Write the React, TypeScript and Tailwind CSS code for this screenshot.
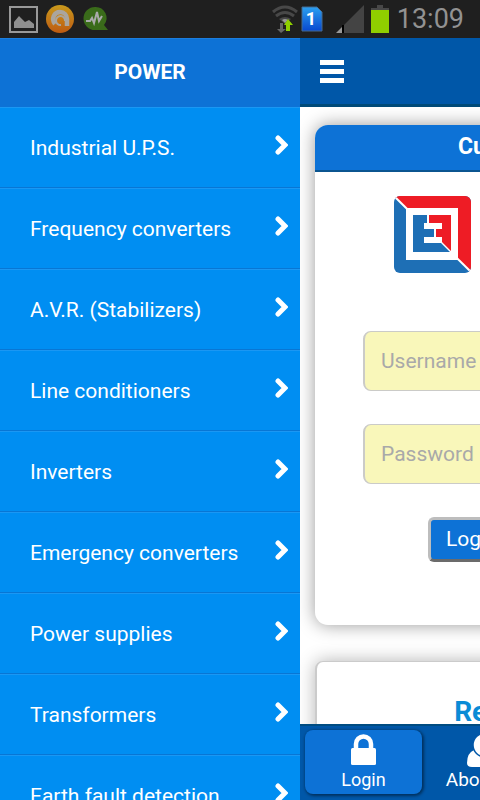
const menuItems = [
  'Industrial U.P.S.',
  'Frequency converters',
  'A.V.R. (Stabilizers)',
  'Line conditioners',
  'Inverters',
  'Emergency converters',
  'Power supplies',
  'Transformers',
  'Earth fault detection',
];

function StatusBar() {
  return (
    <div className="flex h-[38px] shrink-0 items-center justify-between bg-[#1f1f1f] pl-[9px] pr-4">
      <div className="flex items-center gap-2">
        {/* Picture */}
        <svg width="29" height="27" viewBox="0 0 29 27">
          <rect x="1" y="1" width="27" height="25" fill="none" stroke="#999" strokeWidth="2" />
          <path d="M5 22v-6l5-6 6 6 4-2 5 4v4z" fill="#8f8f8f" />
        </svg>
        {/* Antivirus */}
        <svg width="28" height="28" viewBox="0 0 28 28">
          <defs>
            <linearGradient id="orange" x1="0" y1="0" x2="0" y2="1">
              <stop offset="0" stopColor="#c99a1c" />
              <stop offset="1" stopColor="#bd5a12" />
            </linearGradient>
          </defs>
          <circle cx="14" cy="14" r="14" fill="url(#orange)" />
          <path d="M9 19C5 14 8 7 14 7c4 0 7 3 7 7v7" fill="none" stroke="#aaa59e" strokeWidth="4.5" />
          <path d="M19 16a4.5 4.5 0 1 0-4 4" fill="none" stroke="#aaa59e" strokeWidth="2" />
        </svg>
        {/* Monitor */}
        <svg width="26" height="26" viewBox="0 0 26 26" className="ml-px">
          <path d="M12 1a11 11 0 1 0 0 23h13l-4-5A11 11 0 0 0 12 1z" fill="#3a6b1a" />
          <path d="M3 15h4l2-3 2 5 3-11 2 9 3-5" fill="none" stroke="#aaa" strokeWidth="2" />
        </svg>
      </div>

      <div className="flex items-center">
        {/* Wifi */}
        <svg width="26" height="28" viewBox="0 0 26 28">
          <g fill="none" stroke="#484848" strokeWidth="3">
            <path d="M1 7q12-10 24 0" />
            <path d="M4 11q9-7 18 0" />
          </g>
          <path d="M7 14q6-4 12 0l-6 5z" fill="#484848" />
          <path d="M10 15q3-2 6 0l-3 3z" fill="#999" />
          <path d="M8 18h3v6h3l-5 4-4-4h3z" fill="#666" />
          <path d="M14 26v-6h-2l4-6 5 6h-3v6z" fill="#8fd000" />
        </svg>
        {/* Sim card */}
        <svg width="22" height="26" viewBox="0 0 22 26" className="ml-[3px]">
          <defs>
            <linearGradient id="sim" x1="0" y1="0" x2="0" y2="1">
              <stop offset="0" stopColor="#2ba0f0" />
              <stop offset="1" stopColor="#0848d0" />
            </linearGradient>
          </defs>
          <path d="M1 1h15l5 5v19H1z" fill="url(#sim)" stroke="#456b91" />
          <text x="10" y="19" fill="#fff" fontSize="18" fontWeight="700" textAnchor="middle">1</text>
        </svg>
        {/* Signal */}
        <svg width="28" height="28" viewBox="0 0 28 28" className="ml-[13px]">
          <path d="M28 0v28H8V20z" fill="#444" />
          <path d="M0 28l6-6v6z" fill="#999" />
          <path d="M7 20v8" stroke="#000" strokeWidth="2" />
        </svg>
        {/* Battery */}
        <svg width="18" height="28" viewBox="0 0 18 28" className="ml-[7px]">
          <path d="M6 0h6v3h6v2H0V3h6z" fill="#484848" />
          <path d="M0 5h18v23H0z" fill="#90ce00" />
        </svg>
        <span className="ml-2 text-[27px] leading-8 text-[#929292]">13:09</span>
      </div>
    </div>
  );
}

function SideMenu() {
  return (
    <nav className="w-[300px] shrink-0 overflow-hidden bg-[#008ef2] text-white">
      <h2 className="flex h-[69px] items-center justify-center border-t border-[#1b7ddd] bg-[#0d72d6] text-[21px] font-bold">
        POWER
      </h2>
      <ul>
        {menuItems.map((item) => (
          <li key={item}>
            <a
              href="#"
              className="flex h-[81px] items-center justify-between border-t border-b border-t-[#1b97f3] border-b-[#0876d4] pt-0.5 pl-[30px] pr-3 text-[21px]"
            >
              {item}
              <svg width="13" height="20" viewBox="0 0 13 20" className="mb-2">
                <path d="M3 3l7 7-7 7" fill="none" stroke="#fff" strokeWidth="5" strokeLinecap="round" />
              </svg>
            </a>
          </li>
        ))}
      </ul>
    </nav>
  );
}

function Logo() {
  return (
    <svg width="78" height="77" viewBox="0 0 78 77" role="img" aria-label="Logo">
      <defs>
        <clipPath id="logoFrame">
          <rect width="77" height="77" rx="6" />
        </clipPath>
      </defs>
      <g clipPath="url(#logoFrame)">
        <rect width="78" height="77" fill="#1e6fb5" />
        <path d="M0 0h78v77z" fill="#ee1c25" />
        <path d="M0 0l78 77" stroke="#fff" strokeWidth="2" />
      </g>
      <rect x="12" y="12" width="52" height="52" fill="#fff" />
      <path d="M19 19h14v8h-3v6h10v8H30v6h17l9 9H19z" fill="#1e6fb5" />
      <path d="M35 19h22v36l-9-9v-5h-6v-8h6v-6H35z" fill="#ee1c25" />
    </svg>
  );
}

function LoginCard() {
  return (
    <section className="h-[500px] rounded-[13px] bg-white shadow-[0_0_18px_rgba(0,0,0,0.4)]">
      <h1 className="h-[47px] rounded-t-[13px] border-b-2 border-[#0b5590] bg-[#0d72d6] text-center text-[23px] leading-[44px] font-bold text-white">
        Customer Login
      </h1>
      <form className="px-12 pt-6">
        <div className="pl-[31px]">
          <Logo />
        </div>
        <input
          type="text"
          aria-label="Username"
          placeholder="Username"
          className="mt-[58px] block h-[60px] w-full rounded-lg border border-l-2 border-[#cbcbc8] bg-[#f9f7ba] px-4 text-[21px] placeholder:text-[#a9a9a9]"
        />
        <input
          type="password"
          aria-label="Password"
          placeholder="Password"
          className="mt-[33px] block h-[60px] w-full rounded-lg border border-l-2 border-[#cbcbc8] bg-[#f9f7ba] px-4 text-[21px] placeholder:text-[#a9a9a9]"
        />
        <button
          type="button"
          className="mt-[33px] ml-[65px] h-[45px] rounded-md border-[3px] border-t-[#bdbdbd] border-r-[#6b6b6b] border-b-[#6b6b6b] border-l-[#bdbdbd] bg-[#0d72d6] px-[15px] pb-0.5 text-[21px] leading-6 text-white"
        >
          Login
        </button>
      </form>
    </section>
  );
}

function TabBar() {
  return (
    <nav className="flex h-[76px] shrink-0 gap-1 border-t-2 border-[#004c81] bg-[#0057a8] p-1 text-[18px] leading-5 text-white">
      <a
        href="#"
        className="mb-0.5 ml-px flex w-[117px] flex-col items-center rounded-lg bg-[#0d72d6] pt-1 shadow-[1px_1px_3px_1px_rgba(0,0,0,0.45)]"
      >
        <svg width="25" height="32" viewBox="0 0 25 32">
          <path d="M5 16V10a7.5 7.5 0 0 1 15 0v6" fill="none" stroke="#fff" strokeWidth="4.5" />
          <rect y="14" width="25" height="17" rx="1.5" fill="#fff" />
        </svg>
        <span className="mt-1">Login</span>
      </a>
      <a href="#" className="flex w-[117px] flex-col items-center pt-1">
        <svg width="36" height="34" viewBox="0 0 36 34">
          <path d="M7 16q11 8 22 0 7 3 7 13 0 4-5 4H5q-5 0-5-4 0-10 7-13z" fill="#fff" />
          <circle cx="18" cy="11" r="12" fill="#fff" stroke="#0057a8" strokeWidth="1.5" />
        </svg>
        <span className="mt-0.5 text-[19px]">About Us</span>
      </a>
    </nav>
  );
}

export default function App() {
  return (
    <div className="flex h-screen flex-col overflow-hidden font-[Roboto,'Liberation_Sans',sans-serif]">
      <StatusBar />
      <div className="flex min-h-0 flex-1 overflow-hidden">
        <SideMenu />
        {/* Page pushed to the right by the open menu */}
        <div className="flex w-screen shrink-0 flex-col bg-white">
          <header className="flex h-[69px] shrink-0 items-center border-b-[3px] border-[#004a78] bg-[#0057a8] px-5">
            <button type="button" aria-label="Menu" className="flex w-6 flex-col gap-1">
              <span className="h-[5px] bg-white" />
              <span className="h-[5px] bg-white" />
              <span className="h-[5px] bg-white" />
            </button>
          </header>
          <main className="min-h-0 flex-1 overflow-hidden px-[15px] pt-[18px]">
            <LoginCard />
            <section className="mt-9 h-40 rounded-lg border border-l-2 border-[#cbcbcb] bg-white pt-8 text-center shadow-[0_0_18px_rgba(0,0,0,0.3)]">
              <h2 className="text-[28px] leading-9 font-bold text-[#0a8bd6]">Register Here</h2>
            </section>
          </main>
          <TabBar />
        </div>
      </div>
    </div>
  );
}
